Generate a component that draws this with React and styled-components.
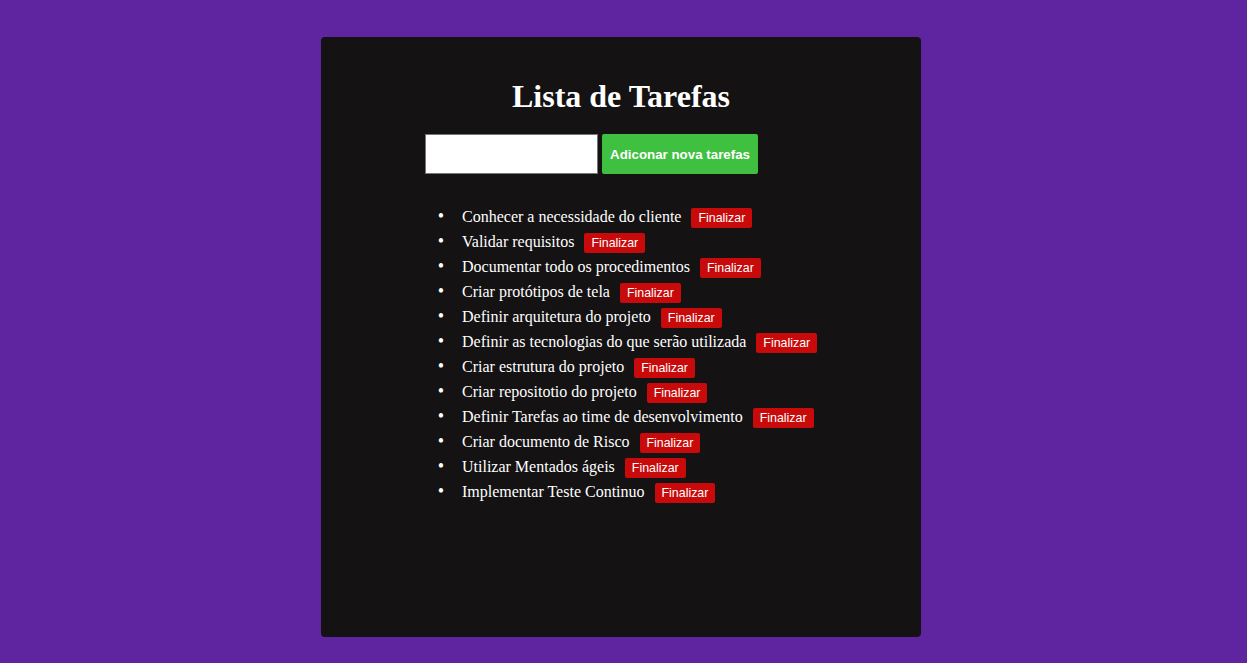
import React, { useState } from "react";
import styled, { createGlobalStyle } from "styled-components";

const GlobalStyle = createGlobalStyle`
  html, body {
    margin: 0;
    padding: 0;
    background: #5f25a1;
  }
  body {
    font-family: "Liberation Serif", "Times New Roman", serif;
  }
`;

const initialTasks = [
  "Conhecer a necessidade do cliente",
  "Validar requisitos",
  "Documentar todo os procedimentos",
  "Criar protótipos de tela",
  "Definir arquitetura do projeto",
  "Definir as tecnologias do que serão utilizada",
  "Criar estrutura do projeto",
  "Criar repositotio do projeto",
  "Definir Tarefas ao time de desenvolvimento",
  "Criar documento de Risco",
  "Utilizar Mentados ágeis",
  "Implementar Teste Continuo",
];

function App() {
  const [tasks, setTasks] = useState(initialTasks);
  const [text, setText] = useState("");

  const addTask = () => {
    if (!text.trim()) return;
    setTasks([...tasks, text.trim()]);
    setText("");
  };

  const finishTask = index => {
    setTasks(tasks.filter((_, i) => i !== index));
  };

  return (
    <Page>
      <GlobalStyle />
      <Card>
        <Title>Lista de Tarefas</Title>
        <Content>
          <Form
            onSubmit={e => {
              e.preventDefault();
              addTask();
            }}>
            <Input value={text} onChange={e => setText(e.target.value)} />
            <AddButton type="submit">Adiconar nova tarefas</AddButton>
          </Form>
          <List>
            {tasks.map((task, i) => (
              <Item key={task + i}>
                <span>{task}</span>
                <FinishButton onClick={() => finishTask(i)}>Finalizar</FinishButton>
              </Item>
            ))}
          </List>
        </Content>
      </Card>
    </Page>
  );
}

export default App;

const Page = styled.div`
  min-height: 663px;
  display: flex;
  justify-content: center;
  padding: 37px 5px 0 0;
  box-sizing: border-box;
`;

const Card = styled.div`
  width: 600px;
  height: 600px;
  background: #141213;
  border-radius: 4px;
  color: #ffffff;
  padding-top: 41px;
  box-sizing: border-box;
  display: flex;
  flex-direction: column;
  align-items: center;
`;

const Title = styled.h1`
  margin: 0 0 20px;
  font-size: 32px;
  font-weight: bold;
  line-height: 36px;
  text-align: center;
`;

const Content = styled.div`
  width: 392px;
`;

const Form = styled.form`
  display: flex;
  gap: 4px;
  margin: 0;
`;

const Input = styled.input`
  width: 173px;
  height: 40px;
  box-sizing: border-box;
  border: 1px solid #767676;
  background: #ffffff;
  padding: 0 6px;
  font-size: 14px;
  outline: none;
`;

const AddButton = styled.button`
  height: 40px;
  padding: 0 8px;
  border: none;
  border-radius: 2px;
  background: #40c040;
  color: #ffffff;
  font-family: "Liberation Sans", Arial, sans-serif;
  font-weight: bold;
  font-size: 13.33px;
  cursor: pointer;
`;

const List = styled.ul`
  margin: 30px 0 0;
  padding-left: 37px;
`;

const Item = styled.li`
  height: 25px;
  font-size: 16px;
  line-height: 25px;
  white-space: nowrap;

  &::marker {
    content: "•\\00a0\\00a0\\00a0\\00a0";
    font-size: 18px;
    line-height: 25px;
  }

  span {
    margin-right: 10px;
  }
`;

const FinishButton = styled.button`
  height: 20px;
  padding: 0 7px;
  border: none;
  border-radius: 2px;
  background: #c80a0a;
  color: #ffffff;
  font-family: "Liberation Sans", Arial, sans-serif;
  font-size: 12.4px;
  vertical-align: middle;
  cursor: pointer;
`;
